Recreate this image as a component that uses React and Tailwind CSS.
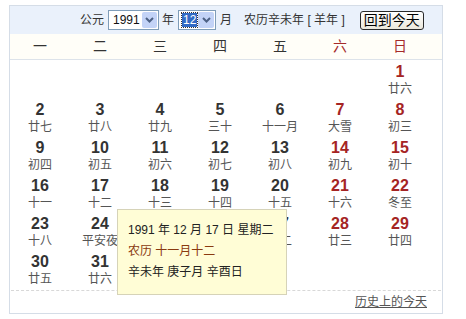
const lunar = [
  "廿六", "廿七", "廿八", "廿九", "三十", "十一月", "大雪", "初三", "初四", "初五",
  "初六", "初七", "初八", "初九", "初十", "十一", "十二", "十三", "十四", "十五",
  "十六", "冬至", "十八", "平安夜", "圣诞节", "廿一", "廿二", "廿三", "廿四", "廿五", "廿六",
];

const weekdays = ["一", "二", "三", "四", "五", "六", "日"];

// Dec 1991 starts on a Sunday -> 6 blanks in a Monday-first grid
const cells = [
  ...Array(6).fill(null),
  ...lunar.map((l, i) => ({ day: i + 1, lunar: l })),
];

const FakeSelect = ({ value, width, highlighted }) => (
  <div
    className={`flex h-[20px] items-stretch border border-[#7f9db9] bg-white ${width}`}
  >
    <div className="flex flex-1 items-center pl-[3px]">
      <span
        className={`px-[1px] text-[12px] leading-[14px] ${
          highlighted
            ? "bg-[#316ac5] text-white outline outline-1 outline-dotted outline-[#333]"
            : "text-[#111]"
        }`}
      >
        {value}
      </span>
    </div>
    <div className="m-[1px] flex w-[16px] items-center justify-center rounded-[2px] bg-[#c3d3f7]">
      <svg width="9" height="6" viewBox="0 0 9 6">
        <path d="M1 1 L4.5 4.5 L8 1" fill="none" stroke="#4d6185" strokeWidth="2" />
      </svg>
    </div>
  </div>
);

const App = () => {
  return (
    <div
      className="pl-[9px] pt-[5px]"
      style={{ fontFamily: '"Liberation Sans", "Noto Sans CJK SC", sans-serif' }}
    >
      <div className="relative h-[309px] w-[434px] border border-[#d5dde7] bg-white">
        {/* Header */}
        <div className="flex h-[28px] items-center bg-[#eaf1fb] pl-[70px] text-[12px] text-[#333]">
          <span>公元</span>
          <div className="ml-[4px]">
            <FakeSelect value="1991" width="w-[51px]" />
          </div>
          <span className="ml-[3px]">年</span>
          <div className="ml-[4px]">
            <FakeSelect value="12" width="w-[38px]" highlighted />
          </div>
          <span className="ml-[4px]">月</span>
          <span className="ml-[12px]">农历辛未年 [ 羊年 ]</span>
          <button
            type="button"
            className="ml-[15px] h-[19px] w-[64px] rounded-[3px] border border-[#2a2a2a] bg-gradient-to-b from-white to-[#ebe8dc] text-[14px] leading-[16px] text-black"
          >
            回到今天
          </button>
        </div>

        {/* Weekday row */}
        <div className="grid h-[26px] grid-cols-[repeat(7,60px)] items-center border-b border-[#dde3ea] bg-[#fffef8] text-[14px]">
          {weekdays.map((w, i) => (
            <div
              key={w}
              className={`text-center ${i >= 5 ? "text-[#a52a2a]" : "text-[#333]"}`}
            >
              {w}
            </div>
          ))}
        </div>

        {/* Days */}
        <div className="grid grid-cols-[repeat(7,60px)] auto-rows-[38px] pt-[2px]">
          {cells.map((c, i) => {
            if (!c) return <div key={`b${i}`} />;
            const weekend = i % 7 >= 5;
            return (
              <div key={c.day} className="flex flex-col items-center">
                <span
                  className={`text-[16px] font-bold leading-[19px] ${
                    weekend ? "text-[#a52424]" : "text-[#333]"
                  }`}
                >
                  {c.day}
                </span>
                <span className="text-[12px] leading-[17px] text-[#555]">
                  {c.lunar}
                </span>
              </div>
            );
          })}
        </div>

        {/* Footer */}
        <div className="mx-[1px] flex h-[23px] items-center justify-end border-t border-dashed border-[#d8d8d8] pr-[14px]">
          <a href="#" className="text-[12px] text-[#555] underline">
            历史上的今天
          </a>
        </div>

        {/* Tooltip */}
        <div className="absolute left-[107px] top-[203px] h-[86px] w-[170px] border border-[#d6d3b8] bg-[#fffdd6] px-[10px] pt-[10px] text-[12px] leading-[21px] text-[#222]">
          <div>1991 年 12 月 17 日 星期二</div>
          <div className="text-[#8a3a10]">农历 十一月十二</div>
          <div>辛未年 庚子月 辛酉日</div>
        </div>
      </div>
    </div>
  );
};

export default App;
